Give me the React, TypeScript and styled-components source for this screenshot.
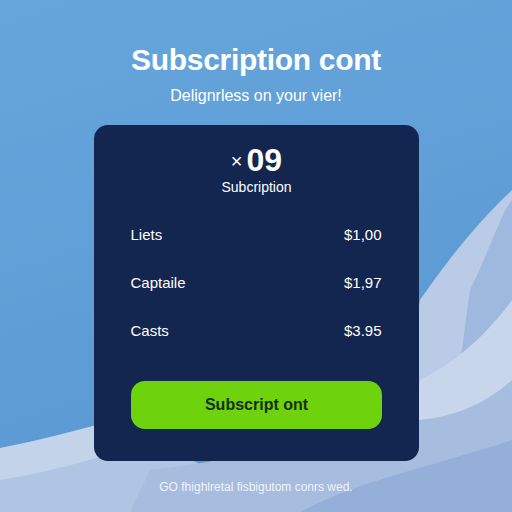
import React from 'react'
import styled, { createGlobalStyle } from 'styled-components'

const GlobalStyle = createGlobalStyle`
	html, body {
		margin: 0;
		padding: 0;
	}
	body {
		font-family: "Liberation Sans", Arial, sans-serif;
		background: #5f9fd8;
	}
`

const rows = [
	{ label: 'Liets', price: '$1,00' },
	{ label: 'Captaile', price: '$1,97' },
	{ label: 'Casts', price: '$3.95' },
]

// soft folded waves in the lower right
const Waves = () => (
	<WaveArt viewBox="0 0 512 512" preserveAspectRatio="none">
		<defs>
			<linearGradient id="sky" x1="0" y1="0" x2="0.3" y2="1">
				<stop offset="0" stopColor="#66a6dc" />
				<stop offset="1" stopColor="#5b98d2" />
			</linearGradient>
		</defs>
		<rect width="512" height="512" fill="url(#sky)" />
		<path d="M420 300 C455 250 480 220 512 190 L512 512 L380 512 Z" fill="#b9cbe6" />
		<path d="M470 290 C490 250 500 215 512 200 L512 512 L440 512 Z" fill="#9fb8de" />
		<path d="M420 380 C460 360 490 330 512 300 L512 512 L400 512 Z" fill="#c8d6ec" />
		<path d="M0 448 C40 440 80 430 120 418 L200 430 L120 512 L0 512 Z" fill="#c3d3ea" />
		<path d="M0 480 C60 470 110 455 150 440 L300 512 L0 512 Z" fill="#b0c5e4" />
		<path d="M150 470 C250 460 330 430 420 420 C460 416 490 400 512 380 L512 512 L130 512 Z" fill="#a7bddf" />
		<path d="M300 512 C360 480 420 470 512 440 L512 512 Z" fill="#94afd8" />
	</WaveArt>
)

const App: React.FunctionComponent = () => {
	return (
		<Page>
			<GlobalStyle />
			<Waves />
			<Title>Subscription cont</Title>
			<Subtitle>Delignrless on your vier!</Subtitle>
			<Card>
				<Count>
					<Times>×</Times>09
				</Count>
				<CountLabel>Subcription</CountLabel>
				<PriceList>
					{rows.map((r) => (
						<PriceRow key={r.label}>
							<span>{r.label}</span>
							<span>{r.price}</span>
						</PriceRow>
					))}
				</PriceList>
				<SubscribeButton>Subscript ont</SubscribeButton>
			</Card>
			<Footer>GO fhighlretal fisbigutom conrs wed.</Footer>
		</Page>
	)
}

const Page = styled.div`
	position: relative;
	width: 512px;
	height: 512px;
	overflow: hidden;
	display: flex;
	flex-direction: column;
	align-items: center;
	color: #fff;
`

const WaveArt = styled.svg`
	position: absolute;
	inset: 0;
	width: 512px;
	height: 512px;
	z-index: 0;
`

const Title = styled.h1`
	position: relative;
	margin: 42px 0 0;
	font-size: 30px;
	font-weight: 700;
	letter-spacing: -0.3px;
	line-height: 36px;
`

const Subtitle = styled.div`
	position: relative;
	margin-top: 8px;
	font-size: 16px;
	line-height: 20px;
`

const Card = styled.div`
	position: relative;
	margin-top: 19px;
	width: 325px;
	height: 336px;
	box-sizing: border-box;
	background: #13264f;
	border-radius: 14px;
	display: flex;
	flex-direction: column;
	align-items: center;
	padding: 18px 36px 0 37px;
`

const Count = styled.div`
	font-size: 32px;
	font-weight: 700;
	line-height: 32px;
	display: flex;
	align-items: center;
`

const Times = styled.span`
	font-size: 20px;
	font-weight: 400;
	margin-right: 4px;
	margin-top: 2px;
`

const CountLabel = styled.div`
	margin-top: 1px;
	font-size: 14px;
	line-height: 18px;
`

const PriceList = styled.div`
	width: 100%;
	margin-top: 30px;
	display: flex;
	flex-direction: column;
	gap: 30px;
`

const PriceRow = styled.div`
	display: flex;
	justify-content: space-between;
	font-size: 15px;
	line-height: 18px;
	padding-right: 1px;
`

const SubscribeButton = styled.button`
	margin-top: 41px;
	width: 251px;
	height: 48px;
	border: none;
	border-radius: 14px;
	background: #6ed30c;
	color: #163016;
	font-family: "Liberation Sans", Arial, sans-serif;
	font-size: 16px;
	font-weight: 700;
	cursor: pointer;
`

const Footer = styled.div`
	position: relative;
	margin-top: 19px;
	font-size: 12px;
	color: rgba(255, 255, 255, 0.85);
`

export default App
